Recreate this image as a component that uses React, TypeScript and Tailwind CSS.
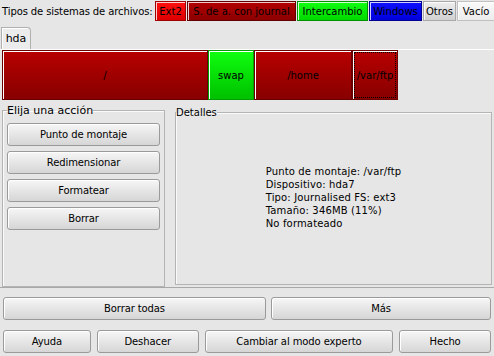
import React from "react";

const legend = [
  { label: "Ext2", cls: "bg-gradient-to-b from-[#ff1010] to-[#dd0000] border-[#a00000]", w: "w-[31px]" },
  { label: "S. de a. con journal", cls: "bg-gradient-to-b from-[#b40000] to-[#8c0000] border-[#600000]", w: "w-[109px]" },
  { label: "Intercambio", cls: "bg-gradient-to-b from-[#10ff10] to-[#00d800] border-[#009000]", w: "w-[71px]" },
  { label: "Windows", cls: "bg-gradient-to-b from-[#1010ff] to-[#0000dc] border-[#000090]", w: "w-[53px]" },
  { label: "Otros", cls: "bg-gradient-to-b from-[#eeeeee] to-[#d0d0d0] border-[#a8a8a8]", w: "w-[33px]" },
  { label: "Vacío", cls: "bg-gradient-to-b from-[#fafafa] to-[#ececec] border-[#c0c0c0]", w: "w-[38px]" },
];

const parts = [
  { label: "/", w: "w-[206px]", green: false, focus: false },
  { label: "swap", w: "w-[46px]", green: true, focus: false },
  { label: "/home", w: "w-[98px]", green: false, focus: false },
  { label: "/var/ftp", w: "w-[46px]", green: false, focus: true },
];

function Btn({ children, className = "" }: { children: React.ReactNode; className?: string }) {
  return (
    <button
      className={`h-[23px] rounded-[3px] border border-[#9a9a9a] bg-gradient-to-b from-[#f6f6f6] to-[#d6d6d6] shadow-[inset_1px_1px_0_#ffffff] text-[10px] text-black tracking-[-0.1px] font-['DejaVu_Sans',sans-serif] ${className}`}
    >
      {children}
    </button>
  );
}

export default function App() {
  return (
    <div className="w-[494px] h-[356px] bg-[#e6e6e6] text-black text-[10px] leading-[13px] overflow-hidden font-['DejaVu_Sans','Bitstream_Vera_Sans',Verdana,sans-serif]">
      {/* legend row */}
      <div className="flex items-center h-[21px] pt-[1px] pl-[2px] gap-[1px] whitespace-nowrap">
        <span className="w-[151px] shrink-0 mr-[1px] tracking-[-0.1px]">Tipos de sistemas de archivos:</span>
        {legend.map((l) => (
          <div
            key={l.label}
            className={`${l.w} shrink-0 h-[20px] border ${l.cls} shadow-[inset_1px_1px_0_rgba(255,255,255,0.8)] flex items-center justify-center overflow-hidden`}
          >
            {l.label}
          </div>
        ))}
      </div>

      {/* tab */}
      <div className="flex mt-[6px] pl-[1px]">
        <div className="w-[30px] h-[22px] bg-[#ececec] border border-b-0 border-[#b0b0b0] rounded-tr-[4px] shadow-[inset_1px_1px_0_#ffffff] flex items-center justify-center text-[11px]">
          hda
        </div>
      </div>

      {/* tab panel */}
      <div className="h-[239px] border-t border-t-white border-b border-b-[#a8a8a8] flex flex-col">
        <div className="flex h-[50px] pl-[2px]">
          {parts.map((p) => (
            <div
              key={p.label}
              className={`${p.w} h-[50px] border p-[1px] ${
                p.green
                  ? "bg-gradient-to-b from-[#10ff10] to-[#00c000] border-[#00a000]"
                  : "bg-gradient-to-b from-[#b80000] to-[#880000] border-[#6a0000]"
              } shadow-[inset_1px_1px_0_#ffffff]`}
            >
              <div
                className={`w-full h-full flex items-center justify-center whitespace-nowrap ${
                  p.focus ? "border border-dotted border-black" : ""
                }`}
              >
                {p.label}
              </div>
            </div>
          ))}
        </div>

        <div className="flex flex-1 pl-[2px] pr-[2px] pt-[4px] gap-[10px]">
          <fieldset className="w-[163px] border border-[#b4b4b4] shadow-[inset_1px_1px_0_#fafafa] px-[4px] pt-[6px]">
            <legend className="px-0 text-[11px]">Elija una acción</legend>
            <div className="flex flex-col gap-[5px]">
              <Btn className="w-[153px] h-[22px]">Punto de montaje</Btn>
              <Btn className="w-[153px] h-[22px]">Redimensionar</Btn>
              <Btn className="w-[153px] h-[22px]">Formatear</Btn>
              <Btn className="w-[153px] h-[22px]">Borrar</Btn>
            </div>
          </fieldset>
          <fieldset className="w-[317px] mt-[2px] mb-[2px] border border-[#b4b4b4] shadow-[inset_1px_1px_0_#fafafa]">
            <legend className="px-0 text-[10px]">Detalles</legend>
            <div className="flex h-full items-center justify-center pb-[8px]">
              <div className="text-[10px] tracking-[0.15px]">
                <div>Punto de montaje: /var/ftp</div>
                <div>Dispositivo: hda7</div>
                <div>Tipo: Journalised FS: ext3</div>
                <div>Tamaño: 346MB (11%)</div>
                <div>No formateado</div>
              </div>
            </div>
          </fieldset>
        </div>
      </div>

      {/* bottom buttons */}
      <div className="flex gap-[5px] px-[3px] mt-[9px]">
        <Btn className="w-[263px]">Borrar todas</Btn>
        <Btn className="w-[220px]">Más</Btn>
      </div>
      <div className="flex gap-[6px] px-[3px] mt-[10px]">
        <Btn className="w-[88px]">Ayuda</Btn>
        <Btn className="w-[102px]">Deshacer</Btn>
        <Btn className="w-[189px]">Cambiar al modo experto</Btn>
        <Btn className="w-[92px]">Hecho</Btn>
      </div>
    </div>
  );
}
